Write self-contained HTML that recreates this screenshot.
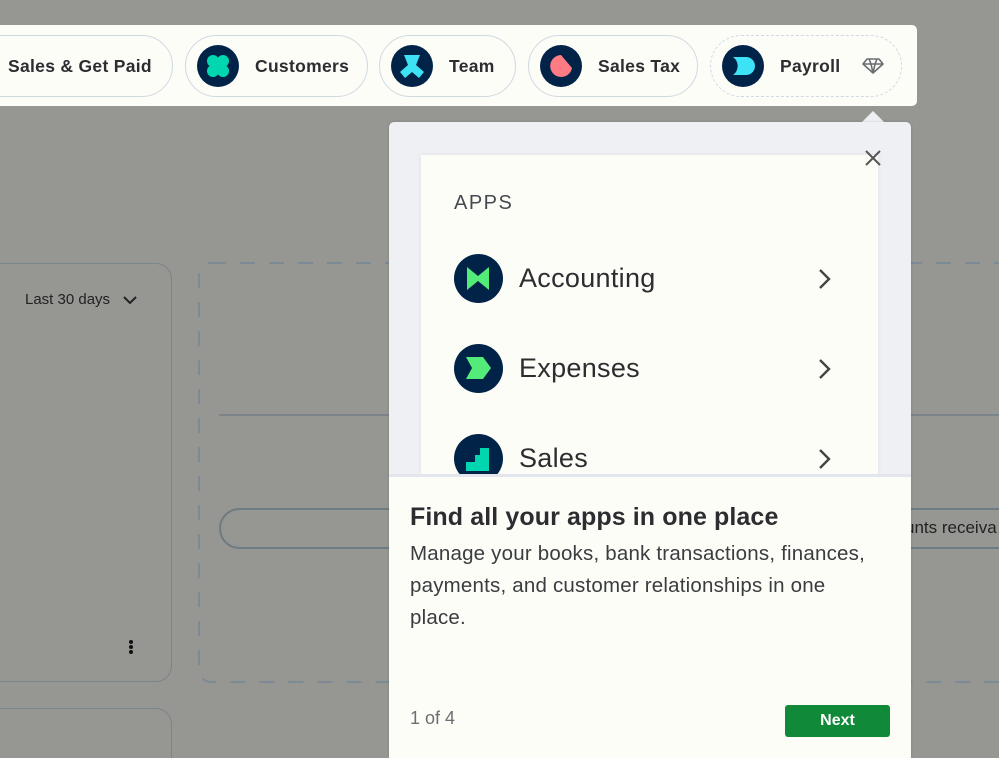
<!DOCTYPE html>
<html><head><meta charset="utf-8"><style>
*{box-sizing:border-box;margin:0;padding:0}
html,body{width:999px;height:758px;overflow:hidden}
body{background:#969793;font-family:"Liberation Sans",sans-serif;position:relative;color:#2b2d30}
.abs{position:absolute}
.bar{left:0;top:25px;width:917px;height:81px;background:#fdfdf8;border-radius:0 5px 5px 0}
.pill{position:absolute;top:35px;height:62px;border:1.5px solid #cfd9e2;border-radius:31px;display:flex;align-items:center;font-size:17.5px;font-weight:bold;color:#2b2d30;letter-spacing:.3px}
.pill .ic{width:42px;height:42px;border-radius:50%;background:#012348;margin:0 16px 0 11px;position:relative;overflow:hidden;flex:none}
.card{border:1.5px solid #7b8489;border-radius:16px}
.row{position:absolute;left:454px;display:flex;align-items:center;font-size:27px;color:#2b2d30;letter-spacing:.3px}
.row .ic{width:49px;height:49px;border-radius:50%;background:#012348;margin-right:16px;position:relative;overflow:hidden}
.chev{position:absolute;left:818px}
</style></head><body>
<div class="abs card" style="left:-20px;top:263px;width:192px;height:419px"></div>
<div class="abs" style="left:25px;top:291px;font-size:15px;color:#222">Last 30 days</div>
<svg class="abs" style="left:122px;top:294px" width="16" height="12"><path d="M2 3 L8 9 L14 3" stroke="#222" stroke-width="2" fill="none"/></svg>
<div class="abs" style="left:129px;top:640px;width:4px">
<div style="width:4px;height:4px;border-radius:50%;background:#111;margin-bottom:1px"></div>
<div style="width:4px;height:4px;border-radius:50%;background:#111;margin-bottom:1px"></div>
<div style="width:4px;height:4px;border-radius:50%;background:#111"></div></div>
<div class="abs card" style="left:-20px;top:708px;width:192px;height:80px"></div>
<svg class="abs" style="left:198px;top:262px" width="801" height="422"><rect x="1" y="1" width="840" height="419" rx="12" fill="none" stroke="#7b8a94" stroke-width="2" stroke-dasharray="15 14"/></svg>
<div class="abs" style="left:219px;top:414px;width:800px;height:1.5px;background:#7b8489"></div>
<div class="abs" style="left:219px;top:508px;width:800px;height:41px;border:2px solid #6f7b82;border-radius:21px"></div>
<div class="abs" style="left:905px;top:518px;font-size:17px;color:#222">unts receiva</div>

<div class="abs bar"></div>
<div class="pill" style="left:-30px;width:203px;padding-left:37px">Sales &amp; Get Paid</div>
<div class="pill" style="left:185px;width:183px"><div class="ic"><svg width="42" height="42"><g fill="#00d7b0"><circle cx="16" cy="16" r="6"/><circle cx="26" cy="16" r="6"/><circle cx="16" cy="26" r="6"/><circle cx="26" cy="26" r="6"/><rect x="15" y="15" width="12" height="12"/></g></svg></div>Customers</div>
<div class="pill" style="left:379px;width:137px"><div class="ic"><svg width="42" height="42"><path d="M13 10 H29 L25 20 L33 27 L28 33 L21 27 L14 33 L9 27 L17 20 Z" fill="#3de3f5"/></svg></div>Team</div>
<div class="pill" style="left:528px;width:170px"><div class="ic"><svg width="42" height="42"><path d="M21 10 L32 23 A11 11 0 1 1 21 10Z" fill="#ff7b84"/></svg></div>Sales Tax</div>
<div class="pill" style="left:710px;width:192px;border:1.5px dashed #cfd9e2"><div class="ic"><svg width="42" height="42"><path d="M11 12 H24 A9 9 0 0 1 24 30 H11 A11 11 0 0 0 11 12Z" fill="#3de3f5"/></svg></div>Payroll<svg style="margin-left:22px" width="22" height="18"><path d="M5 2 H17 L21 7 L11 16 L1 7 Z M1 7 H21 M7 2 L9 7 L11 16 L13 7 L15 2" stroke="#6b6e72" stroke-width="1.6" fill="none" stroke-linejoin="round"/></svg></div>

<svg class="abs" style="left:861px;top:111px" width="24" height="12"><path d="M0 12 L12 0 L24 12Z" fill="#eef0f4"/></svg>
<div class="abs" style="left:389px;top:122px;width:522px;height:636px;background:#eef0f4;border-radius:5px 5px 0 0;box-shadow:0 0 3px rgba(0,0,0,.15)"></div>
<div class="abs" style="left:421px;top:155px;width:457px;height:321px;background:#fdfdf8;box-shadow:0 0 6px rgba(0,0,0,.06)"></div>
<svg class="abs" style="left:864px;top:149px" width="18" height="18"><path d="M2 2 L16 16 M16 2 L2 16" stroke="#555" stroke-width="2"/></svg>
<div class="abs" style="left:454px;top:192px;font-size:20px;letter-spacing:1.5px;color:#444a50">APPS</div>
<div class="row" style="top:254px"><div class="ic"><svg width="49" height="49"><path d="M13 13 L24 22 L35 13 V36 L24 27 L13 36Z" fill="#53ec78"/></svg></div>Accounting</div>
<div class="row" style="top:344px"><div class="ic"><svg width="49" height="49"><path d="M12 13 H29 L37 24 L29 35 H12 L18 24Z" fill="#53ec78"/></svg></div>Expenses</div>
<div class="row" style="top:434px"><div class="ic"><svg width="49" height="49"><path d="M12 37 V28 H21 V21 H26 V14 H35 V37Z" fill="#00d7b0"/></svg></div>Sales</div>
<svg class="chev" style="top:268px" width="14" height="22"><path d="M2 2 L11 11 L2 20" stroke="#444" stroke-width="2.4" fill="none"/></svg>
<svg class="chev" style="top:358px" width="14" height="22"><path d="M2 2 L11 11 L2 20" stroke="#444" stroke-width="2.4" fill="none"/></svg>
<svg class="chev" style="top:448px" width="14" height="22"><path d="M2 2 L11 11 L2 20" stroke="#444" stroke-width="2.4" fill="none"/></svg>
<div class="abs" style="left:389px;top:474px;width:522px;height:3px;background:#e3e6ec"></div>
<div class="abs" style="left:389px;top:477px;width:522px;height:281px;background:#fdfdf8"></div>
<div class="abs" style="left:410px;top:503px;font-size:25px;font-weight:bold;color:#2b2d30;letter-spacing:.1px">Find all your apps in one place</div>
<div class="abs" style="left:410px;top:538px;width:470px;font-size:20.5px;line-height:32px;color:#3a3d40;letter-spacing:.2px">Manage your books, bank transactions, finances, payments, and customer relationships in one place.</div>
<div class="abs" style="left:410px;top:708px;font-size:18px;color:#6b6e72">1 of 4</div>
<div class="abs" style="left:785px;top:705px;width:105px;height:32px;background:#108a38;border-radius:3px;color:#fff;font-weight:bold;font-size:16px;display:flex;align-items:center;justify-content:center">Next</div>
</body></html>
